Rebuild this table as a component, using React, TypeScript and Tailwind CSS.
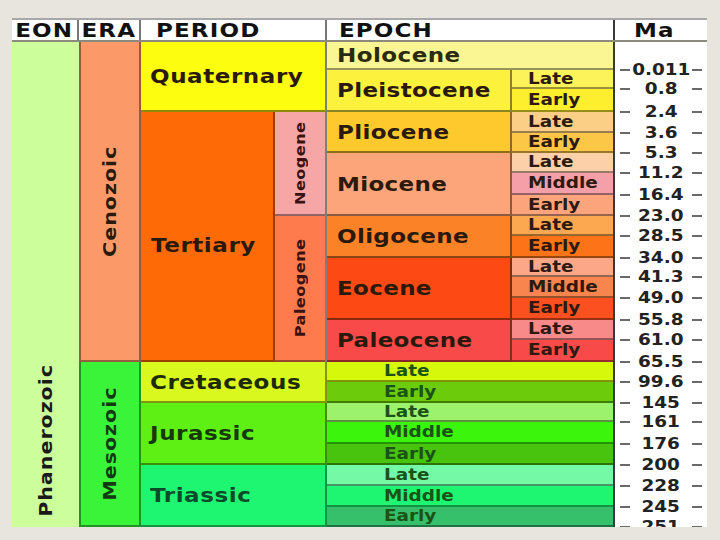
import React from "react";

type Sub = { l: string; c: string; h: number; ma: string };
type Epoch = { n: string; c: string; h: number; ma?: string; subs?: Sub[] };

const ceno: Epoch[] = [
  { n: "Holocene", c: "h-[28px] bg-[#fbf694]", h: 28, ma: "0.011" },
  {
    n: "Pleistocene",
    c: "h-[42px] bg-[#fcf13c]",
    h: 42,
    subs: [
      { l: "Late", c: "h-[19px] bg-[#fcf35a]", h: 19, ma: "0.8" },
      { l: "Early", c: "h-[23px] bg-[#fdef2e]", h: 23, ma: "2.4" },
    ],
  },
  {
    n: "Pliocene",
    c: "h-[41px] bg-[#fdc92c]",
    h: 41,
    subs: [
      { l: "Late", c: "h-[21px] bg-[#fccf86]", h: 21, ma: "3.6" },
      { l: "Early", c: "h-[20px] bg-[#fcc646]", h: 20, ma: "5.3" },
    ],
  },
  {
    n: "Miocene",
    c: "h-[63px] bg-[#fca47a]",
    h: 63,
    subs: [
      { l: "Late", c: "h-[20px] bg-[#fcd0a8]", h: 20, ma: "11.2" },
      { l: "Middle", c: "h-[22px] bg-[#f5a0a8]", h: 22, ma: "16.4" },
      { l: "Early", c: "h-[21px] bg-[#fca57c]", h: 21, ma: "23.0" },
    ],
  },
  {
    n: "Oligocene",
    c: "h-[42px] bg-[#fc8228]",
    h: 42,
    subs: [
      { l: "Late", c: "h-[20px] bg-[#fca850]", h: 20, ma: "28.5" },
      { l: "Early", c: "h-[22px] bg-[#fd7418]", h: 22, ma: "34.0" },
    ],
  },
  {
    n: "Eocene",
    c: "h-[62px] bg-[#fd4a14]",
    h: 62,
    subs: [
      { l: "Late", c: "h-[19px] bg-[#fca888]", h: 19, ma: "41.3" },
      { l: "Middle", c: "h-[21px] bg-[#f8854e]", h: 21, ma: "49.0" },
      { l: "Early", c: "h-[22px] bg-[#fd5020]", h: 22, ma: "55.8" },
    ],
  },
  {
    n: "Paleocene",
    c: "h-[42px] bg-[#f94a4a]",
    h: 42,
    subs: [
      { l: "Late", c: "h-[20px] bg-[#f98a8a]", h: 20, ma: "61.0" },
      { l: "Early", c: "h-[22px] bg-[#f94a4a]", h: 22, ma: "65.5" },
    ],
  },
];

type Period = { n: string; c: string; h: number; subs: Sub[]; tc: string };

const meso: Period[] = [
  {
    n: "Cretaceous",
    c: "h-[41px] bg-[#d8f81e]",
    h: 41,
    tc: "text-[#1c2a06]",
    subs: [
      { l: "Late", c: "h-[20px] bg-[#d6f80a]", h: 20, ma: "99.6" },
      { l: "Early", c: "h-[21px] bg-[#6ccc0c]", h: 21, ma: "145" },
    ],
  },
  {
    n: "Jurassic",
    c: "h-[62px] bg-[#5ef014]",
    h: 62,
    tc: "text-[#17380a]",
    subs: [
      { l: "Late", c: "h-[19px] bg-[#9cf26c]", h: 19, ma: "161" },
      { l: "Middle", c: "h-[22px] bg-[#3cf50c]", h: 22, ma: "176" },
      { l: "Early", c: "h-[21px] bg-[#48c40e]", h: 21, ma: "200" },
    ],
  },
  {
    n: "Triassic",
    c: "h-[62px] bg-[#1ef672]",
    h: 62,
    tc: "text-[#0b4a2a]",
    subs: [
      { l: "Late", c: "h-[21px] bg-[#74faa6]", h: 21, ma: "228" },
      { l: "Middle", c: "h-[21px] bg-[#1ef672]", h: 21, ma: "245" },
      { l: "Early", c: "h-[20px] bg-[#36c06c]", h: 20, ma: "251" },
    ],
  },
];

function maMarks() {
  const out: { y: number; v: string }[] = [];
  let y = 0;
  for (const e of ceno) {
    if (e.subs) {
      for (const s of e.subs) {
        y += s.h;
        out.push({ y, v: s.ma });
      }
    } else {
      y += e.h;
      out.push({ y, v: e.ma || "" });
    }
  }
  for (const p of meso) {
    for (const s of p.subs) {
      y += s.h;
      out.push({ y, v: s.ma });
    }
  }
  return out;
}

const font = "font-['DejaVu_Sans','Verdana',sans-serif]";
const wideL = "inline-block origin-left scale-x-[1.15]";
const wideC = "inline-block origin-center scale-x-[1.15]";
const tallC = "[writing-mode:vertical-rl] rotate-180 origin-center scale-y-[1.15]";

export default function App() {
  const marks = maMarks();
  return (
    <div className={`w-[720px] h-[540px] bg-[#e7e5de] pt-[18px] pl-[12px] ${font}`}>
      <div className="flex flex-col w-[695px]">
        {/* header */}
        <div className="flex h-[24px] bg-white border-t-2 border-b-2 border-t-[#a8a8a8] border-b-[#8c8a80] text-[20px] font-bold leading-none tracking-[1px] text-[#111]">
          <div className="w-[67px] flex items-center justify-center border-r-2 border-[#777]">
            <span className={wideC}>EON</span>
          </div>
          <div className="w-[62px] flex items-center justify-center border-r-2 border-[#777]">
            <span className={wideC}>ERA</span>
          </div>
          <div className="w-[186px] flex items-center pl-[15px] border-r-2 border-[#777]">
            <span className={wideL}>PERIOD</span>
          </div>
          <div className="w-[286px] flex items-center pl-[12px]">
            <span className={wideL}>EPOCH</span>
          </div>
          <div className="w-[94px] flex items-center pl-[19px] border-l-2 border-[#3a3a3a]">
            <span className={wideL}>Ma</span>
          </div>
        </div>

        {/* body */}
        <div className="flex h-[485px]">
          {/* EON */}
          <div className="w-[67px] h-full bg-[#ccfe9c] flex items-end justify-center pb-[20px]">
            <span className={`${tallC} text-[18px] font-bold leading-none tracking-[0.8px] text-[#1a1a1a]`}>
              Phanerozoic
            </span>
          </div>

          {/* ERA */}
          <div className="w-[62px] flex flex-col">
            <div className="h-[320px] bg-[#fb9a68] border-l-2 border-r-2 border-b-2 border-black/40 flex items-center justify-center">
              <span className={`${tallC} text-[18px] font-bold leading-none tracking-[0.8px] text-[#2b1a0c]`}>
                Cenozoic
              </span>
            </div>
            <div className="h-[165px] bg-[#3af43a] border-l-2 border-r-2 border-b-2 border-black/40 flex items-center justify-center">
              <span className={`${tallC} text-[18px] font-bold leading-none tracking-[0.8px] text-[#123a12]`}>
                Mesozoic
              </span>
            </div>
          </div>

          {/* PERIOD + EPOCH */}
          <div className="w-[472px] flex flex-col">
            {/* Cenozoic */}
            <div className="flex h-[320px]">
              <div className="w-[186px] flex flex-col border-r-2 border-black/45 text-[#2b1a0c]">
                <div className="h-[70px] bg-[#fdfd10] border-b-2 border-black/45 flex items-center pl-[9px] text-[20px] font-bold leading-none tracking-[0.5px]">
                  <span className={wideL}>Quaternary</span>
                </div>
                <div className="h-[250px] flex">
                  <div className="w-[134px] bg-[#fe6a06] border-r-2 border-b-2 border-black/40 flex items-center pl-[10px] pt-[18px] text-[20px] font-bold leading-none tracking-[0.5px]">
                    <span className={wideL}>Tertiary</span>
                  </div>
                  <div className="w-[50px] flex flex-col">
                    <div className="h-[104px] bg-[#f6a6a4] border-b-2 border-black/40 flex items-center justify-center">
                      <span className={`${tallC} text-[14px] font-bold leading-none tracking-[0.4px] text-[#3a1212]`}>
                        Neogene
                      </span>
                    </div>
                    <div className="h-[146px] bg-[#fd7b4c] border-b-2 border-black/40 flex items-center justify-center">
                      <span className={`${tallC} text-[14px] font-bold leading-none tracking-[0.4px] text-[#3a1212]`}>
                        Paleogene
                      </span>
                    </div>
                  </div>
                </div>
              </div>
              <div className="w-[286px] flex flex-col text-[#2b1a0c]">
                {ceno.map((e) =>
                  e.subs ? (
                    <div key={e.n} className="flex">
                      <div
                        className={`${e.c} w-[185px] border-r-2 border-b-2 border-black/45 flex items-center pl-[10px] text-[20px] font-bold leading-none tracking-[0.3px]`}
                      >
                        <span className={wideL}>{e.n}</span>
                      </div>
                      <div className="w-[101px] flex flex-col">
                        {e.subs.map((s, i) => (
                          <div
                            key={i}
                            className={`${s.c} border-b-2 border-black/40 flex items-center pl-[16px] text-[16px] font-bold leading-none text-[#2e1a10]`}
                          >
                            <span className={wideL}>{s.l}</span>
                          </div>
                        ))}
                      </div>
                    </div>
                  ) : (
                    <div
                      key={e.n}
                      className={`${e.c} border-b-2 border-black/40 flex items-center pl-[10px] text-[20px] font-bold leading-none tracking-[0.4px] text-[#2a2a10]`}
                    >
                      <span className={wideL}>{e.n}</span>
                    </div>
                  )
                )}
              </div>
            </div>

            {/* Mesozoic */}
            {meso.map((p) => (
              <div key={p.n} className="flex">
                <div
                  className={`${p.c} ${p.tc} w-[186px] border-r-2 border-b-2 border-black/40 flex items-center pl-[9px] text-[20px] font-bold leading-none tracking-[0.5px]`}
                >
                  <span className={wideL}>{p.n}</span>
                </div>
                <div className="w-[286px] flex flex-col">
                  {p.subs.map((s, i) => (
                    <div
                      key={i}
                      className={`${s.c} border-b-2 border-black/40 flex items-center pl-[57px] text-[16px] font-bold leading-none text-[#1b5216]`}
                    >
                      <span className={wideL}>{s.l}</span>
                    </div>
                  ))}
                </div>
              </div>
            ))}
          </div>

          {/* Ma */}
          <div className="w-[94px] h-full bg-white border-l-2 border-[#3a3a3a] relative overflow-hidden">
            {marks.map((m) => (
              <div
                key={m.v}
                className="absolute left-0 w-[92px] h-[18px] flex items-center"
                style={{ top: m.y - 9 }}
              >
                <div className="ml-[5px] w-[10px] h-[2px] bg-[#6a6a6a]" />
                <div className="w-[62px] text-center text-[16px] font-bold leading-none text-[#222]">
                  <span className={wideC}>{m.v}</span>
                </div>
                <div className="w-[10px] h-[2px] bg-[#6a6a6a]" />
              </div>
            ))}
          </div>
        </div>
      </div>
    </div>
  );
}
